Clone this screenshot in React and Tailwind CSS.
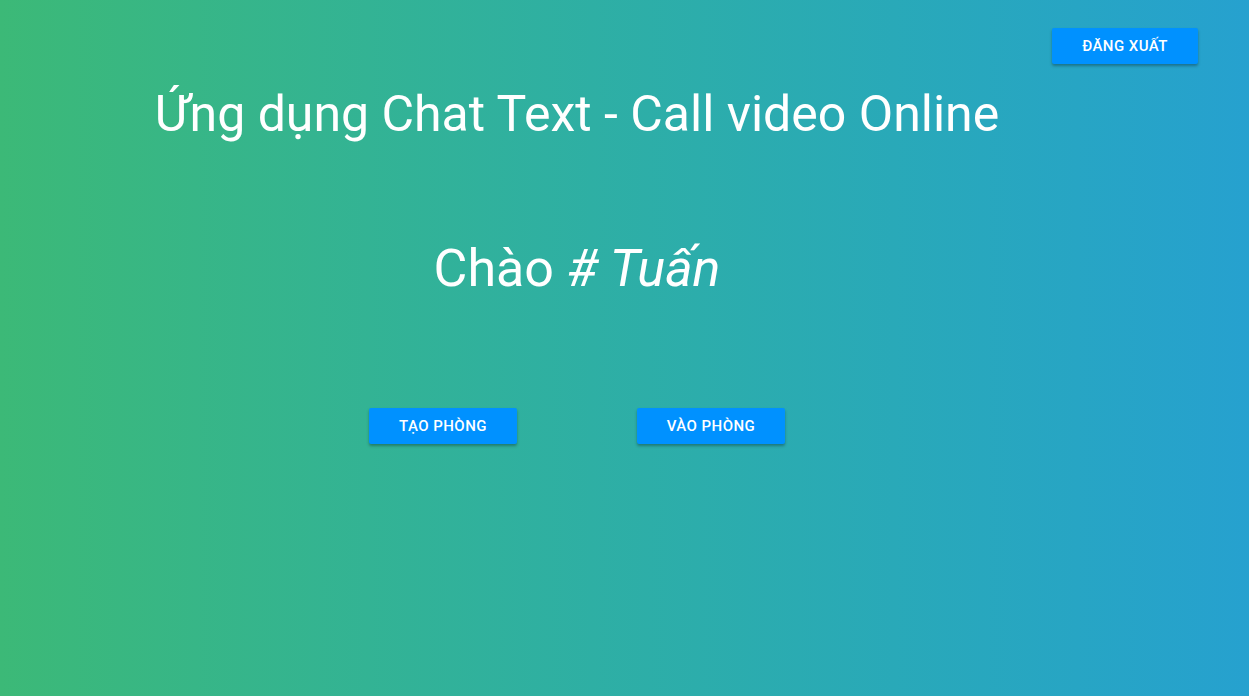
import React from 'react';

const Btn = ({ children, className = '' }) => (
  <button className={`h-9 bg-[#0091ff] text-white text-[15px] font-medium tracking-[0.03em] uppercase rounded-[2px] shadow-[0_2px_3px_rgba(0,0,0,0.3)] ${className}`}>
    {children}
  </button>
);

const App = () => (
  <div className="min-h-[696px] w-full bg-gradient-to-r from-[#3cb977] to-[#26a1cf] font-['Roboto',sans-serif] text-white">
    <div className="flex justify-end pt-7 pr-[51px]">
      <Btn className="w-[146px]">Đăng xuất</Btn>
    </div>
    <div className="w-[1154px] flex flex-col items-center">
      <h1 className="mt-[21px] text-[50px] leading-[58px] font-normal">Ứng dụng Chat Text - Call video Online</h1>
      <h2 className="mt-[96px] text-[52px] leading-[60px] font-normal">
        Chào <i># Tuấn</i>
      </h2>
      <div className="mt-[109px] flex gap-[120px]">
        <Btn className="w-[148px]">Tạo phòng</Btn>
        <Btn className="w-[148px]">Vào phòng</Btn>
      </div>
    </div>
  </div>
);

export default App;
